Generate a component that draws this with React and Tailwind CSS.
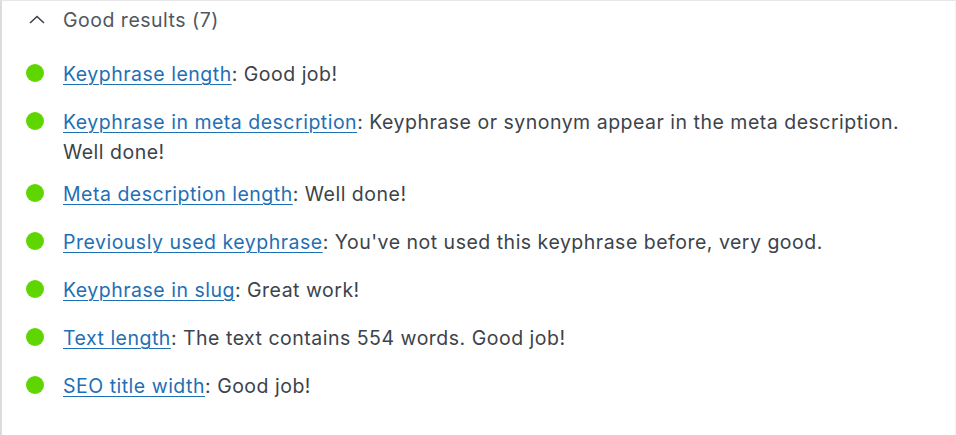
const results = [
  { link: "Keyphrase length", text: "Good job!" },
  {
    link: "Keyphrase in meta description",
    text: "Keyphrase or synonym appear in the meta description. Well done!",
  },
  { link: "Meta description length", text: "Well done!" },
  { link: "Previously used keyphrase", text: "You've not used this keyphrase before, very good." },
  { link: "Keyphrase in slug", text: "Great work!" },
  { link: "Text length", text: "The text contains 554 words. Good job!" },
  { link: "SEO title width", text: "Good job!" },
];

export default function App() {
  return (
    <div
      className="w-[956px] h-[435px] bg-white border-l-2 border-t border-r border-l-[#dcdcde] border-t-[#e6e6e6] border-r-[#f3f3f3] overflow-hidden"
      style={{ fontFamily: "Inter, 'Noto Sans', sans-serif" }}
    >
      {/* header */}
      <div className="flex items-center h-[30px] mt-[4px] pl-[26px] text-[19.5px] leading-[30px] tracking-[0.5px] text-[#50575e]">
        <svg width="18" height="10" viewBox="0 0 18 10" className="shrink-0">
          <polyline points="2,8 9,1.5 16,8" fill="none" stroke="#3c434a" strokeWidth="1.6" />
        </svg>
        <span className="ml-[17px]">Good results (7)</span>
      </div>

      {/* results */}
      <ul className="mt-[24px] pl-[24px] flex flex-col gap-3">
        {results.map((r, i) => (
          <li key={i} className="flex items-start min-h-[36px]">
            <span className="shrink-0 w-[18px] h-[18px] mt-[5px] rounded-full bg-[#60d600]" />
            <p className="ml-[19px] w-[860px] text-[19.5px] leading-[30px] tracking-[0.5px] text-[#3c434a]">
              <a href="#" className="text-[#1f6fb5] underline decoration-1 underline-offset-[3px]">
                {r.link}
              </a>
              : {r.text}
            </p>
          </li>
        ))}
      </ul>
    </div>
  );
}
